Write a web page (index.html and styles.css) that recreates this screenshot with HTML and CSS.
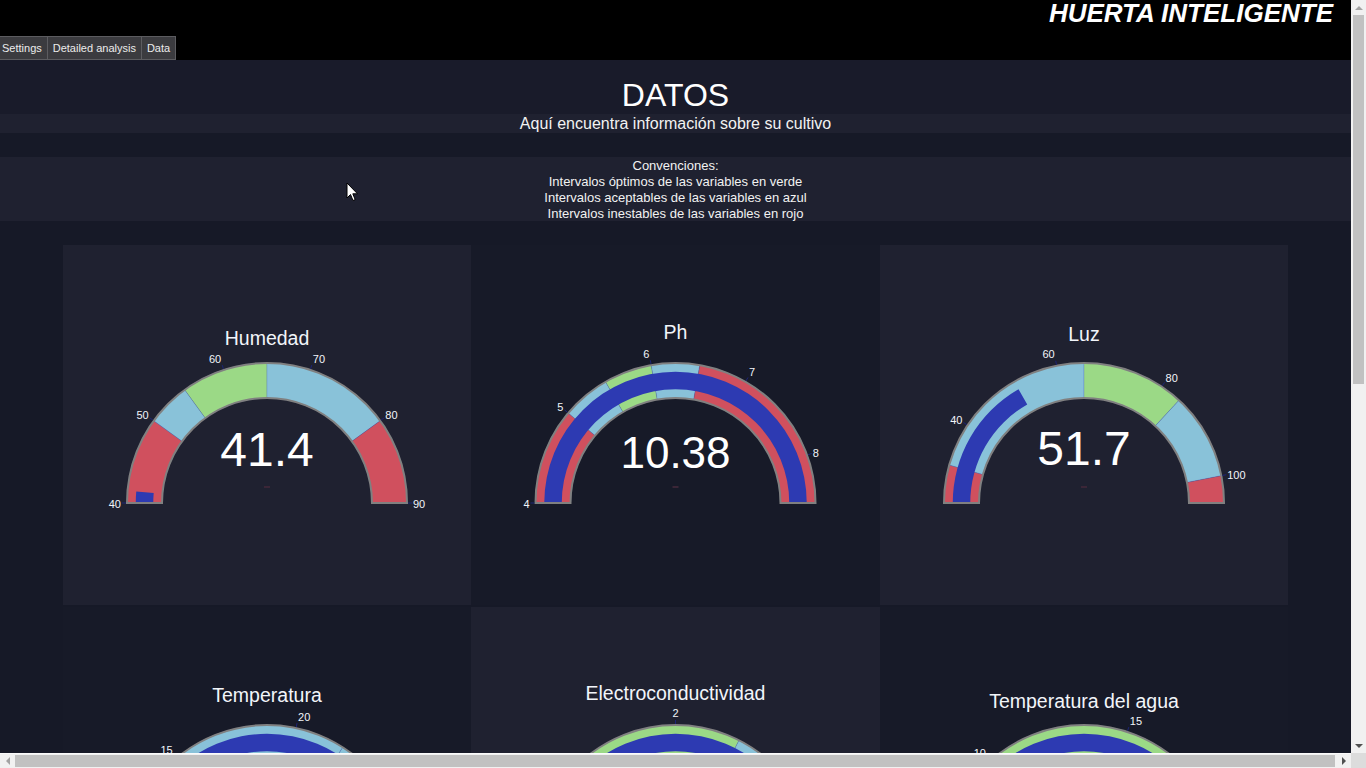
FILE: index.html
```html
<!DOCTYPE html>
<html lang="es">
<head>
<meta charset="utf-8">
<title>Huerta Inteligente</title>
<link rel="stylesheet" href="styles.css">
</head>
<body>
<div class="window">
  <div class="app">
    <header class="topbar">
      <h1 class="brand">HUERTA INTELIGENTE</h1>
      <nav class="tabs">
        <a class="tab">Settings</a>
        <a class="tab">Detailed analysis</a>
        <a class="tab">Data</a>
      </nav>
    </header>
    <main class="page">
      <section class="intro">
        <h2 class="intro-title">DATOS</h2>
        <p class="intro-sub">Aquí encuentra información sobre su cultivo</p>
      </section>
      <section class="legend">
        <p>Convenciones:</p>
        <p>Intervalos óptimos de las variables en verde</p>
        <p>Intervalos aceptables de las variables en azul</p>
        <p>Intervalos inestables de las variables en rojo</p>
      </section>
      <section class="board" id="board">
        <div class="card"></div>
        <div class="card"></div>
        <div class="card"></div>
        <div class="card"></div>
        <div class="card"></div>
        <div class="card"></div>
      </section>
    </main>
  </div>
  <div class="vscroll">
    <span class="sb-btn"><span class="tri tri-up"></span></span>
    <span class="sb-track sb-track-v"><span class="sb-thumb-v"></span></span>
    <span class="sb-btn"><span class="tri tri-down"></span></span>
  </div>
  <div class="hscroll">
    <span class="sb-btn"><span class="tri tri-left"></span></span>
    <span class="sb-track sb-track-h"><span class="sb-thumb-h"></span></span>
    <span class="sb-btn"><span class="tri tri-right"></span></span>
  </div>
  <div class="sb-corner"></div>
</div>
<svg class="cursor" width="13" height="21" viewBox="0 0 13 21" aria-hidden="true"><path d="M1 1 L1 16 L4.5 12.5 L7 18.5 L9.2 17.6 L6.8 11.8 L11.5 11.8 Z" fill="#fff" stroke="#000" stroke-width="1" stroke-linejoin="round"/></svg>
<script src="gauges.js"></script>
</body>
</html>
```

FILE: styles.css
```css
html, body {
  margin: 0;
  padding: 0;
  height: 100%;
  overflow: hidden;
  background: #161927;
  font-family: "Liberation Sans", Arial, sans-serif;
  color: #f2f2f2;
}

.window {
  width: 100vw;
  height: 100vh;
  display: grid;
  grid-template-columns: 1fr 15px;
  grid-template-rows: 1fr 15px;
}

.app {
  overflow: hidden;
  min-width: 0;
  min-height: 0;
  background: #161927;
}

.topbar {
  background: #000;
  height: 60px;
  display: flex;
  flex-direction: column;
}

.brand {
  margin: 0;
  height: 36px;
  padding: 0 18px 0 0;
  font-size: 26px;
  line-height: 26px;
  font-weight: bold;
  font-style: italic;
  text-align: right;
  color: #fff;
}

.tabs {
  display: flex;
  margin-left: -4px;
}

.tab {
  display: block;
  height: 20px;
  line-height: 20px;
  padding: 1px 5px 1px;
  font-size: 11px;
  color: #ececec;
  background: #3b3b3f;
  border: 1px solid #5c5c60;
  margin-right: -1px;
}

.page {
  display: flex;
  flex-direction: column;
}

.intro {
  display: flex;
  flex-direction: column;
}

.intro-title {
  margin: 0;
  background: #191b2a;
  padding: 17px 0 0;
  font-size: 32px;
  line-height: 37px;
  font-weight: normal;
  text-align: center;
  color: #fff;
}

.intro-sub {
  margin: 0;
  background: #1f2130;
  font-size: 16px;
  line-height: 19px;
  text-align: center;
}

.legend {
  margin-top: 24px;
  height: 63px;
  padding-top: 1px;
  background: #1f2130;
  text-align: center;
}

.legend p {
  margin: 0;
  font-size: 13px;
  line-height: 16px;
}

.board {
  margin: 24px auto 0;
  width: 1225px;
  display: grid;
  grid-template-columns: 408px 409px 408px;
  grid-auto-rows: 360px;
  row-gap: 2px;
}

.card {
  background: #171a28;
  overflow: hidden;
}

.card:nth-child(odd) {
  background: #1f2130;
}

.card svg {
  display: block;
  width: 100%;
  height: 360px;
}

.g-title {
  font-size: 19.5px;
  fill: #f2f5fa;
}

.g-value {
  fill: #ffffff;
}

.g-tick {
  font-size: 11px;
  fill: #f2f5fa;
}

/* scrollbars */
.vscroll {
  display: flex;
  flex-direction: column;
  background: #f1f1f1;
}

.hscroll {
  display: flex;
  background: #f1f1f1;
  border-top: 1px solid #fafafa;
}

.sb-btn {
  flex: 0 0 15px;
  display: flex;
  align-items: center;
  justify-content: center;
}

.vscroll .sb-btn {
  height: 15px;
}

.sb-track {
  flex: 1;
  display: flex;
}

.sb-track-v {
  flex-direction: column;
  padding: 0 2px;
}

.sb-thumb-v {
  height: 369px;
  background: #c1c1c1;
}

.sb-track-h {
  padding: 1px 0 1px;
  align-items: stretch;
}

.sb-thumb-h {
  width: 1320px;
  background: #c1c1c1;
}

.sb-corner {
  background: #dcdcdc;
}

.tri {
  width: 0;
  height: 0;
  border-style: solid;
}

.tri-up {
  border-width: 0 4px 4px 4px;
  border-color: transparent transparent #a3a3a3 transparent;
}

.tri-down {
  border-width: 4px 4px 0 4px;
  border-color: #505050 transparent transparent transparent;
}

.tri-left {
  border-width: 4px 4px 4px 0;
  border-color: transparent #a3a3a3 transparent transparent;
}

.tri-right {
  border-width: 4px 0 4px 4px;
  border-color: transparent transparent transparent #505050;
}

.cursor {
  position: absolute;
  left: 346px;
  top: 182px;
}
```

FILE: gauges.js
```js
(function () {
  var COL = { r: '#d0505e', b: '#89c2d9', g: '#9bd986' };
  var BAR = '#2d3ab2';
  var R = 140, RI = 105, BI = 113.75, BO = 131.25, CX = 204, CY = 258, TL = 5;

  var gauges = [
    { title: 'Humedad', min: 40, max: 90, value: 41.4, text: '41.4', size: 48, vdy: -37, tdy: -157.7,
      ticks: [40, 50, 60, 70, 80, 90],
      steps: [[40, 50, 'r'], [50, 55, 'b'], [55, 65, 'g'], [65, 80, 'b'], [80, 90, 'r']] },
    { title: 'Ph', min: 4, max: 8.5, value: 10.38, text: '10.38', size: 44, vdy: -35.3, tdy: -163.7,
      ticks: [4, 5, 6, 7, 8],
      steps: [[4, 5, 'r'], [5, 5.5, 'b'], [5.5, 6, 'g'], [6, 6.5, 'b'], [6.5, 8.5, 'r']] },
    { title: 'Luz', min: 25, max: 105, value: 51.7, text: '51.7', size: 48, vdy: -38, tdy: -162.3,
      ticks: [40, 60, 80, 100],
      steps: [[25, 32, 'r'], [32, 65, 'b'], [65, 84, 'g'], [84, 100, 'b'], [100, 105, 'r']] },
    { title: 'Temperatura', min: 10.2, max: 27.5, value: 29.1, text: '29.1', size: 48, vdy: -37, tdy: -163,
      ticks: [15, 20, 25],
      steps: [[10.2, 12, 'r'], [12, 22, 'b'], [22, 26, 'b'], [26, 27.5, 'r']] },
    { title: 'Electroconductividad', min: 1, max: 3, value: 3.4, text: '3.4', size: 48, vdy: -37, tdy: -165,
      ticks: [1, 2, 3],
      steps: [[1, 1.2, 'r'], [1.2, 1.5, 'b'], [1.5, 2.3, 'g'], [2.3, 2.8, 'b'], [2.8, 3, 'r']] },
    { title: 'Temperatura del agua', min: 6, max: 21, value: 23.2, text: '23.2', size: 48, vdy: -37, tdy: -156.7,
      ticks: [10, 15, 20],
      steps: [[6, 8, 'r'], [8, 9, 'b'], [9, 18, 'g'], [18, 20, 'b'], [20, 21, 'r']] }
  ];

  function f(n) { return n.toFixed(2); }
  function ang(g, v) {
    var c = Math.min(Math.max(v, g.min), g.max);
    return Math.PI * (1 - (c - g.min) / (g.max - g.min));
  }
  function pt(a, rad) { return [CX + rad * Math.cos(a), CY - rad * Math.sin(a)]; }
  function sector(g, v1, v2, ri, ro) {
    var a1 = ang(g, v1), a2 = ang(g, v2);
    var p1 = pt(a1, ro), p2 = pt(a2, ro), p3 = pt(a2, ri), p4 = pt(a1, ri);
    return 'M' + f(p1[0]) + ' ' + f(p1[1]) +
      'A' + ro + ' ' + ro + ' 0 0 1 ' + f(p2[0]) + ' ' + f(p2[1]) +
      'L' + f(p3[0]) + ' ' + f(p3[1]) +
      'A' + ri + ' ' + ri + ' 0 0 0 ' + f(p4[0]) + ' ' + f(p4[1]) + 'Z';
  }

  function build(g) {
    var s = '<svg viewBox="0 0 408 360" xmlns="http://www.w3.org/2000/svg">';
    s += '<text class="g-title" x="' + CX + '" y="' + f(CY + g.tdy) + '" text-anchor="middle">' + g.title + '</text>';
    g.steps.forEach(function (st) {
      s += '<path d="' + sector(g, st[0], st[1], RI, R) + '" fill="' + COL[st[2]] + '" stroke="#4a62c8" stroke-opacity="0.45" stroke-width="0.6"/>';
    });
    s += '<path d="' + sector(g, g.min, g.value, BI, BO) + '" fill="' + BAR + '"/>';
    s += '<path d="' + sector(g, g.min, g.max, RI, R) + '" fill="none" stroke="#808080" stroke-width="2"/>';
    g.ticks.forEach(function (t) {
      var a = ang(g, t);
      var p1 = pt(a, R + 1), p2 = pt(a, R + TL);
      s += '<line x1="' + f(p1[0]) + '" y1="' + f(p1[1]) + '" x2="' + f(p2[0]) + '" y2="' + f(p2[1]) + '" stroke="#1c2477" stroke-width="1"/>';
      var c = Math.cos(a), sn = Math.sin(a);
      var anchor = 'middle', x = p2[0];
      if (c > 0.1) { anchor = 'start'; x = p2[0] + 1; }
      else if (c < -0.1) { anchor = 'end'; x = p2[0] - 1; }
      var yc = p2[1] + 1 - 3.5 * sn - 4 * sn * sn;
      s += '<text class="g-tick" x="' + f(x) + '" y="' + f(yc + 3.9) + '" text-anchor="' + anchor + '">' + t + '</text>';
    });
    s += '<text class="g-value" x="' + CX + '" y="' + f(CY + g.vdy) + '" text-anchor="middle" font-size="' + g.size + '">' + g.text + '</text>';
    s += '<rect x="' + (CX - 3) + '" y="' + (CY - 17) + '" width="6" height="2" fill="#3b2637"/>';
    s += '</svg>';
    return s;
  }

  var cards = document.querySelectorAll('#board .card');
  gauges.forEach(function (g, i) { if (cards[i]) cards[i].innerHTML = build(g); });
})();
```
